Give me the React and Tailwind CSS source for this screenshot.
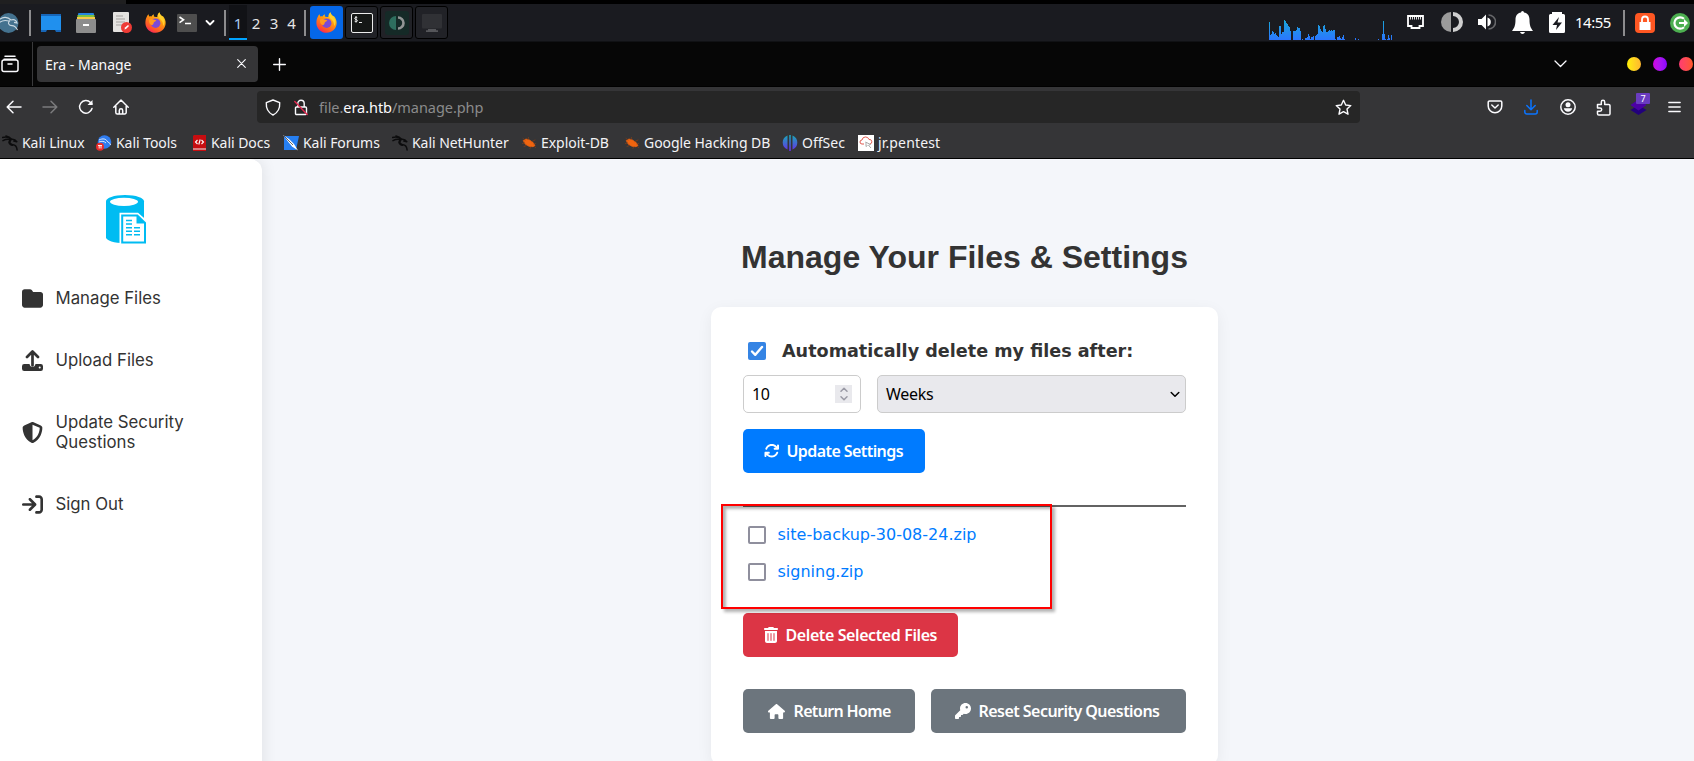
import React from "react";
import { FaFolder, FaShieldHalved, FaArrowRightToBracket, FaArrowsRotate, FaTrashCan, FaHouse, FaKey } from "react-icons/fa6";

const Svg = ({ w, h, className = "", children, sw = 1.5, color = "#fbfbfe" }) => (
  <svg width={w} height={h} viewBox={`0 0 ${w} ${h}`} fill="none" stroke={color} strokeWidth={sw} strokeLinecap="round" strokeLinejoin="round" className={`shrink-0 ${className}`}>
    {children}
  </svg>
);

const Sep = ({ className = "" }) => <div className={`h-[26px] w-[2px] shrink-0 bg-[#8c8c8e] ${className}`} />;

const Firefox = ({ className = "" }) => (
  <svg width="21" height="21" viewBox="0 0 21 21" className={`shrink-0 ${className}`}>
    <defs>
      <linearGradient id="fx" x1="0.8" y1="0" x2="0.2" y2="1">
        <stop offset="0" stopColor="#ffe226" />
        <stop offset="0.4" stopColor="#ff980e" />
        <stop offset="0.8" stopColor="#ff4f2e" />
        <stop offset="1" stopColor="#f5156c" />
      </linearGradient>
    </defs>
    <path fill="url(#fx)" d="M1.8 4.8C2.2 3.6 2.8 2.9 3.6 2.2l.5 2.2c.7-.2 1.7-.2 2.4 0 .4-.9 1.3-1.8 2.3-2.2l.1 2.3c1 .3 3.4.6 3.4.6C12.2 3.200 12.900 1.400 14.600.2c.3 2.300 1.600 3 2.700 4.100l.5-.3c2 2.100 3.200 4.900 2.800 8.100-.6 5-4.800 8.700-9.900 8.700C5.300 20.800.5 16.800.4 11.200.4 8.900.7 6.500 1.800 4.800z" />
    <circle cx="10.600" cy="11.200" r="4.800" fill="#7a4bd6" />
    <path fill="#ff9a1f" d="M4 7.700c1.200-1 3.200-1 4.400-.2 1 .6 2.500.3 3 1-.3 1-2.400 1.100-2.700 2.200-.2 1.500-.9 2.300-2.200 2.300C4.600 12.400 3.600 10 4 7.700z" />
    <path fill="#ffd02e" d="M14.400.4c.3 2.600 3.300 3.800 4.600 7 .9 2.400.5 5-1 6.600.3-2.700-.6-5.200-3-6.900-1.200-.9-2-2.400-1.900-4 .1-1.100.6-2 1.300-2.700z" />
  </svg>
);

const Dragon = ({ color, className = "", sw = 1.5 }) => (
  <Svg w={16} h={16} color={color} sw={sw} className={className}>
    <path d="M.5 2.500C4 1.600 7 2 9.500 4.200M1 5.600c2.500-1.400 5.500-1.700 8-.8M4 .9c2 .3 4 1.200 5.500 3.300M9 4.500c3-.6 4.600.4 5.800 2.200l-3-.7M8.500 5.200C5.600 7.500 8 9.600 10.800 9.700c2.400.1 4 1.600 4.300 5.200" />
    <path d="M8.200 5.500c-1.400 2-.3 4 2 4.400" strokeWidth="2" />
  </Svg>
);

const Bug = () => (
  <Svg w={14} h={14} color="#8a3f16" sw={0.7}>
    <path d="M1.500 4.500 4 3l3.500 1 3.500 2.500 2 3-2 1.200-4-.4-3.500-2z" fill="#f0640f" stroke="#f0640f" />
    <path d="M3 4 1 2.500M6 3.500 6.500 1.500M2 7 0 7.600M4.500 9.500 2 10.500M9 11l-1 1.500M10 5.500l3-1.500M12 8l2-.5M12.300 10.500l1.400 1" />
  </Svg>
);

const load = [18,5,6,9,8,6,7,5,4,3,14,14,6,8,8,20,19,17,16,14,13,9,0,0,9,9,9,10,13,12,12,9,0,1,0,0,2,2,3,6,4,1,3,3,4,0,4,5,6,15,14,11,9,8,14,15,11,8,8,9,10,9,10,9,10,10,1,0,3,3,4,2,1,3,5,1,0,0,0,0,0,0,0,0,0,0,2,0,0,1,0,0,0,0,0,0,0,0,0,0,0,0,0,0,0,0,0,0,0,1,0,0,0,6,19,6,1,0,1,5,2,0,5];

function Panel() {
  return (
    <div className="flex h-[37px] w-full shrink-0 items-center overflow-hidden bg-[#1a1b20]">
      <svg width="19" height="20" viewBox="0 0 19 20" className="shrink-0" fill="none">
        <circle cx="8.500" cy="10" r="10" fill="#44728f" />
        <path d="M-1 7C3 3 8 4 11 7M-1 10c3-3 6-3 10-2M11 7c3-1 5 0 6 3l-3-.6M10 7.500C7 10 9 12.500 12 12.600s4 1.400 5.500 4.400" stroke="#c9d8e2" strokeWidth="1.100" />
      </svg>
      <Sep className="ml-[10px]" />
      <svg width="20" height="18" className="ml-[10px] shrink-0"><path d="M0 0h20v18h-5l-1-2H6l-1 2H0z" fill="#1766b8" /><path d="M0 2h20v14H0z" fill="#2090ee" /></svg>
      <svg width="20" height="20" className="ml-[15px] shrink-0">
        <rect x="2" width="16" height="4" rx="1" fill="#2384e0" /><rect x="1.500" y="2" width="17" height="4" fill="#7cc242" /><rect x="1" y="4" width="18" height="4" fill="#f7c948" />
        <rect y="6" width="20" height="14" rx="1" fill="#8d8d8d" /><rect x="7" y="11" width="6" height="2" fill="#fff" />
      </svg>
      <svg width="20" height="21" className="ml-[16px] shrink-0">
        <rect x="1" width="16" height="20" rx="1" fill="#e4e2e0" /><path d="M4 4h7M4 7h9M4 10h9M4 13h6" stroke="#a5a29f" strokeWidth="1" />
        <circle cx="14.500" cy="15.500" r="5.500" fill="#ee3b35" /><path d="m12.500 17.500.5-2 3-2.500 1 1-3 3z" fill="#fff" />
      </svg>
      <Firefox className="ml-[13px]" />
      <svg width="20" height="18" className="ml-[11px] shrink-0" fill="none"><rect width="20" height="18" rx="1" fill="#4e4e4e" /><path d="m2.500 3 4 2.800-4 2.800M8 9.500h6" stroke="#fff" strokeWidth="1.600" /></svg>
      <Svg w={10} h={6} color="#fff" sw={1.800} className="ml-[8px]"><path d="m1.500 1 3.500 3.500L8.500 1" /></Svg>
      <Sep className="ml-[9px]" />
      <div className="ml-[3px] flex h-[35px] w-[18px] shrink-0 justify-center border-b-2 border-[#00a3ff] bg-[#111216] font-['Noto_Sans'] text-[15px] leading-[36px] text-[#a9cdf0]">1</div>
      <div className="flex w-[57px] shrink-0 font-['Noto_Sans'] text-[15px] leading-[36px] text-[#e6e6e6]">
        <span className="w-[18px] text-center">2</span><span className="w-[18px] text-center">3</span><span className="w-[17px] text-center">4</span>
      </div>
      <Sep />
      <div className="ml-[4px] flex shrink-0 gap-[2px]">
        <div className="flex h-[33px] w-[33px] items-center justify-center rounded-[3px] bg-[#0567e8]"><Firefox /></div>
        <div className="flex h-[33px] w-[33px] items-center justify-center rounded-[3px] border border-black bg-[#212227]">
          <svg width="22" height="20" fill="none"><rect x=".5" y=".5" width="21" height="19" rx="1.500" fill="#151716" stroke="#ececec" /><path d="M6.300 4.700C5.500 4 3.700 4.300 3.700 5.400c0 1.400 2.700.9 2.700 2.300 0 1-1.800 1.300-2.800.5M5 3v6.500M8 9.500h3" stroke="#fff" strokeWidth=".9" /></svg>
        </div>
        <div className="flex h-[33px] w-[33px] items-center justify-center rounded-[3px] border border-black bg-[#212227]">
          <svg width="24" height="24" fill="none"><rect width="24" height="24" rx="3" fill="#152a27" /><path d="M11 5a7 7 0 0 0 0 14z" fill="#2e6e5e" /><path d="M13 6.500a5.500 5.500 0 0 1 0 11" stroke="#929595" strokeWidth="2.600" /></svg>
        </div>
        <div className="flex h-[33px] w-[33px] items-center justify-center rounded-[3px] border border-black bg-[#212227]">
          <svg width="20" height="18"><rect width="20" height="14.500" rx="1" fill="#303135" /><path d="M6 15h8v1.200h2V18H4v-1.800h2z" fill="#55565a" /></svg>
        </div>
      </div>
      <svg width="123" height="20" className="ml-auto mb-[-15px] shrink-0" shapeRendering="crispEdges">
        <defs><linearGradient id="ld" gradientUnits="userSpaceOnUse" x1="0" y1="0" x2="0" y2="20"><stop stopColor="#19a8d8" /><stop offset="1" stopColor="#2b76ff" /></linearGradient></defs>
        {load.map((v, i) => (v ? <rect key={i} x={i} y={20 - v} width="1" height={v} fill="url(#ld)" /> : null))}
      </svg>
      <svg width="17" height="14" className="ml-[15px] mt-[-1px] shrink-0" fill="none"><path d="M1 1h15v10h-3.500v2h-8v-2H1z" stroke="#fff" strokeWidth="1.800" /><path d="M3.500 2v2.500M5.500 2v2.500M7.500 2v2.500M9.500 2v2.500M11.500 2v2.500M13.500 2v2.500" stroke="#ddd" /></svg>
      <svg width="22" height="20" className="ml-[17px] mt-[-1px] shrink-0" fill="none"><path d="M10 0a10 10 0 0 0 0 20z" fill="#9b9b9b" /><path d="M12 2a8 8 0 0 1 0 16" stroke="#cfcfcf" strokeWidth="4" /></svg>
      <svg width="18" height="16" className="ml-[15px] mt-[-1px] shrink-0" fill="none"><path d="M0 5h3.500L8 .5v15L3.500 11H0z" fill="#fff" /><path d="M9.500 3.500a4.700 4.700 0 0 1 0 9z" fill="#fff" /><path d="M10.500 1a7 7 0 0 1 0 14" stroke="#66676a" strokeWidth="1.600" /></svg>
      <svg width="21" height="23" className="ml-[16px] shrink-0" fill="#fff"><path d="M9 1.500a1.500 1.500 0 0 1 3 0c3.500.6 5.500 3.200 5.500 7 0 6 1 8 3.500 11.500H0c2.500-3.500 3.500-5.500 3.500-11.500 0-3.800 2-6.400 5.500-7zM8 21h5c-.5 1.300-1.400 2-2.500 2S8.500 22.300 8 21z" /></svg>
      <svg width="16" height="21" className="ml-[16px] shrink-0"><path d="M3 0h10v2h1.500A1.500 1.500 0 0 1 16 3.500v16a1.500 1.500 0 0 1-1.500 1.500h-13A1.500 1.500 0 0 1 0 19.500v-16A1.500 1.500 0 0 1 1.500 2H3z" fill="#fff" /><path d="m10 5-6.500 8H8l-1 5 6-7.500H8.500z" fill="#1a1b20" /></svg>
      <div className="ml-[10px] w-[38px] shrink-0 whitespace-nowrap font-['Noto_Sans'] text-[15px] tracking-[-0.5px] text-white">14:55</div>
      <Sep className="ml-[10px]" />
      <svg width="20" height="20" className="ml-[10px] shrink-0" fill="none"><rect width="20" height="20" rx="4" fill="#ff5722" /><rect x="4.500" y="9" width="11" height="8" fill="#fff" /><path d="M7 9V6.500a3 3 0 0 1 6 0V9" stroke="#fff" strokeWidth="1.800" /></svg>
      <svg width="20" height="20" className="ml-[15px] mr-[4px] shrink-0" fill="none"><circle cx="10" cy="10" r="10" fill="#4caf50" /><path d="M14 5.800a5.700 5.700 0 1 0 0 8.400" stroke="#fff" strokeWidth="2.200" /><path d="M9 9h5V6l4 4-4 4v-3H9z" fill="#fff" /></svg>
    </div>
  );
}

function Tabs() {
  return (
    <div className="flex h-[46px] w-full shrink-0 items-center border-b border-black bg-[#060606] border-t border-t-[#101114]">
      <Svg w={18} h={18} className="ml-[1px]"><path d="M4 1.200h10M3 4.300h12M3 5h12a2 2 0 0 1 2 2v7.500a2 2 0 0 1-2 2H3a2 2 0 0 1-2-2V7a2 2 0 0 1 2-2zM7 9h4" /></Svg>
      <div className="ml-[13px] h-full w-px bg-[#3a3a3c]" />
      <div className="ml-[4px] mt-[-1px] flex h-[36px] w-[221px] items-center rounded-[4px] bg-[#353537] pl-[8px]">
        <span className="w-[192px] whitespace-nowrap pt-[2px] font-['Noto_Sans'] text-[14px] text-[#fbfbfe]">Era - Manage</span>
        <Svg w={9} h={9} sw={1.100}><path d="m.7.700 7.600 7.600M8.300.700.700 8.300" /></Svg>
      </div>
      <Svg w={13} h={13} className="ml-[15px] mt-px" sw={1.400}><path d="M6.500.7v11.600M.7 6.500h11.600" /></Svg>
      <Svg w={13} h={8} className="ml-auto mt-[-1px]" sw={1.300}><path d="m1 1 5.500 5.500L12 1" /></Svg>
      <div className="ml-[60px] flex shrink-0 gap-[12px] pr-[1px]">
        <div className="size-[14px] rounded-full bg-linear-to-r from-[#fff000] to-[#ffb62e]" />
        <div className="size-[14px] rounded-full bg-linear-to-r from-[#cf00e0] to-[#8a00ff]" />
        <div className="size-[14px] rounded-full bg-linear-to-r from-[#ff3b72] to-[#ff5722]" />
      </div>
    </div>
  );
}

function Nav() {
  return (
    <div className="flex h-[40px] w-full shrink-0 items-center">
      <Svg w={16} h={14} className="ml-[6px]"><path d="M15 7H1.500M7 1.200 1.200 7 7 12.800" /></Svg>
      <Svg w={16} h={14} className="ml-[20px]" color="#7b7b7d"><path d="M1 7h13.500M9 1.200 14.800 7 9 12.800" /></Svg>
      <Svg w={16} h={16} className="ml-[20px]"><path d="M14 9.500A6.300 6.300 0 1 1 12.500 3.500L14 5" /><path d="M14.500 1v5h-5z" fill="#fbfbfe" stroke="none" /></Svg>
      <Svg w={16} h={16} className="ml-[19px]"><path d="M.8 8.200 8 1l7.200 7.200M2.800 7v6.500a1.500 1.500 0 0 0 1.500 1.500h7.400a1.500 1.500 0 0 0 1.500-1.500V7M6.300 15v-3.500a1.700 1.700 0 0 1 3.400 0V15" /></Svg>
      <div className="ml-[128px] flex h-[32px] w-[1103px] items-center rounded-[4px] bg-[#262626]">
        <Svg w={16} h={17} className="ml-[8px]" sw={1.400}><path d="M8 1l6.700 2.600c.3 5-.9 9.600-6.700 12.400C2.200 13.200 1 8.600 1.300 3.600z" /></Svg>
        <Svg w={14} h={17} className="ml-[13px]" sw={1.400}><path d="M2.500 8h9a1 1 0 0 1 1 1v5.500a1 1 0 0 1-1 1h-9a1 1 0 0 1-1-1V9a1 1 0 0 1 1-1zM3.800 8V4.500a3.200 3.200 0 0 1 6.400 0V8" /><path d="m.8 2.500 12.400 13" stroke="#e22850" /></Svg>
        <div className="ml-[11px] w-[300px] whitespace-nowrap font-['Noto_Sans'] text-[14.500px] leading-5 tracking-[-0.05px] text-[#8b8b8c]">file.<span className="text-[#fbfbfe]">era.htb</span>/manage.php</div>
        <Svg w={17} h={17} className="ml-auto mr-[8px]" sw={1.400}><path d="m8.500 1.300 2.200 4.700 5.100.6-3.800 3.500 1 5.100-4.500-2.500L4 15.200l1-5.100L1.200 6.600 6.300 6z" /></Svg>
      </div>
      <Svg w={16} h={14} className="ml-[127px]"><path d="M2.500 1h11a1.300 1.300 0 0 1 1.300 1.300V6a6.800 6.800 0 0 1-13.600 0V2.300A1.300 1.300 0 0 1 2.500 1zM4.800 5 8 8l3.200-3" /></Svg>
      <Svg w={14} h={16} className="ml-[21px]" color="#0a74ff"><path d="M7 1v9.500M2.800 6.500 7 10.700l4.200-4.200M.8 11.500V13a2 2 0 0 0 2 2h8.400a2 2 0 0 0 2-2v-1.500" /></Svg>
      <Svg w={16} h={16} className="ml-[22px]"><circle cx="8" cy="8" r="7.200" /><circle cx="8" cy="5.800" r="2.500" fill="#fbfbfe" stroke="none" /><path d="M3.800 9.300h8.400c-.5 2.300-2 3.500-4.200 3.500s-3.700-1.200-4.200-3.500z" fill="#fbfbfe" stroke="none" /></Svg>
      <Svg w={15} h={17} className="ml-[20px]"><path d="M1.500 5.500h3.800V3a1.700 1.700 0 0 1 3.400 0v2.500h4a1.300 1.300 0 0 1 1.300 1.300v8a1.300 1.300 0 0 1-1.300 1.300H2.800a1.300 1.300 0 0 1-1.300-1.300v-2.500H4a1.700 1.700 0 0 0 0-3.400H1.500z" /></Svg>
      <div className="relative ml-[19px] h-[20px] w-[21px] shrink-0">
        <svg width="17" height="16" className="mt-[2px]"><path d="m8.500 6 8 5-8 5-8-5z" fill="#22007c" /><path d="m8.500.500 8 5.500-8 5.500L.5 6z" fill="#4c00a5" /></svg>
        <div className="absolute left-[6px] top-[-4px] h-[11px] w-[14px] rounded-[1px] bg-[#6a3cc0] text-center font-['Noto_Sans'] text-[9px] leading-[11px] text-white">7</div>
      </div>
      <Svg w={13} h={12} className="ml-[17px]" sw={1.300}><path d="M.8 1.500h11.400M.8 6h11.400M.8 10.500h11.400" /></Svg>
    </div>
  );
}

const bm = "shrink-0 whitespace-nowrap tracking-[-0.05px]";
function Bookmarks() {
  return (
    <div className="flex h-[31px] w-full shrink-0 items-center font-['Noto_Sans'] text-[14px] text-[#f3f3f6]">
      <Dragon color="#0c0c0d" className="ml-[2px]" />
      <span className={`${bm} ml-[4px] w-[74px]`}>Kali Linux</span>
      <svg width="16" height="16" className="shrink-0" fill="none"><circle cx="8.500" cy="7" r="6.800" fill="#2f7cf0" /><path d="M3 5c4-2 7-1 8 1s3 1 3.500 4M3 7c3-1 5-1 7 1" stroke="#dce9fb" /><circle cx="4" cy="11.700" r="4" fill="#ea2c2c" /><path d="M2 10.500h4M3.200 10.500v3M5 10.500v3" stroke="#fff" strokeWidth=".9" /></svg>
      <span className={`${bm} ml-[4px] w-[77px]`}>Kali Tools</span>
      <svg width="13" height="16" className="shrink-0" fill="none"><path d="M1 0h12v16H0V1z" fill="#c70d10" /><path d="M0 14h13" stroke="#eee" /><path d="M4.500 5 2.500 7l2 2M8.500 5l2 2-2 2M7.200 4.500 5.800 9.500" stroke="#fff" strokeWidth="1.100" /></svg>
      <span className={`${bm} ml-[5px] w-[72px]`}>Kali Docs</span>
      <svg width="16" height="16" className="shrink-0"><path d="M1 1h15l-3 14H1z" fill="#267ff2" /><path d="m0 0 6 4 5 5 4 6.500-6-4-4-5z" fill="#fff" /><path d="m1 1 9 9" stroke="#222" strokeWidth=".7" /></svg>
      <span className={`${bm} ml-[4px] w-[89px]`}>Kali Forums</span>
      <Dragon color="#0c0c0d" />
      <span className={`${bm} ml-[4px] w-[110px]`}>Kali NetHunter</span>
      <Bug />
      <span className={`${bm} ml-[5px] w-[84px]`}>Exploit-DB</span>
      <Bug />
      <span className={`${bm} ml-[5px] w-[138px]`}>Google Hacking DB</span>
      <svg width="16" height="16" className="shrink-0"><defs><linearGradient id="os" x1="0" x2="0" y1="0" y2="1"><stop stopColor="#18a9b8" /><stop offset="1" stopColor="#6a2ce8" /></linearGradient></defs><path d="M5.500.5v14A7.500 7.500 0 0 1 5.500.5zM10.500.5v14a7.500 7.500 0 0 0 0-14zM7.200 0h1.600v16H7.200z" fill="url(#os)" /></svg>
      <span className="ml-[4px] w-[56px] shrink-0 whitespace-nowrap">OffSec</span>
      <svg width="16" height="16" className="shrink-0" fill="none"><path d="M0 0h16v16H0z" fill="#fff" /><path d="M6 9H4a2 2 0 0 1 0-4 3.600 3.600 0 0 1 7-.5 2.300 2.300 0 0 1 1 4.500" stroke="#e05a50" /><path d="m7.500 7 5 2.500-2 .8 2.500 2.700M8 7v4.500l1.500-1" stroke="#aaa" /></svg>
      <span className="ml-[4px] shrink-0 whitespace-nowrap tracking-[0.15px]">jr.pentest</span>
    </div>
  );
}

const link = "flex items-center pl-[22px] font-['Inter'] text-[16.800px] leading-5 text-[#333]";
function Sidebar() {
  return (
    <aside className="flex h-[640px] w-[262px] shrink-0 flex-col rounded-r-[12px] bg-white shadow-[2px_0_14px_rgba(0,0,0,0.08)]">
      <svg width="41" height="49" viewBox="0 0 41 50" preserveAspectRatio="none" className="ml-[106px] mt-[36px] shrink-0" fill="none">
        <path d="M0 6.500C0 3 8 0 19 0s19 3 19 6.500V43c0 3.500-8 6-19 6S0 46.500 0 43z" fill="#00bcf2" />
        <ellipse cx="18" cy="7" rx="14" ry="4.200" fill="#fff" />
        <path d="M13.500 18H32l9 8v24H13.500z" fill="#fff" />
        <path d="M15.200 20h16.500l8.300 8v21.500H15.200z" fill="#00bcf2" />
        <path d="M17.200 22H30.500v7h7.500v18.500H17.200z" fill="#fff" />
        <path d="M20 26h6M20 29.500h6M20 33.500h6M28 33.500h6M20 37h6M28 37h6M20 40.500h6M28 40.500h6" stroke="#00bcf2" strokeWidth="1.600" />
      </svg>
      <div className={`${link} mt-[44px] h-[20px]`}><FaFolder size={21} className="mr-[12.500px] shrink-0" /><span>Manage Files</span></div>
      <div className={`${link} mt-[42px] h-[20px]`}>
        <svg width="21" height="21" viewBox="0 0 21 21" fill="none" className="mr-[12.500px] shrink-0">
          <path d="M10.500 15.500V2M5 7l5.500-5.500L16 7" stroke="#333" strokeWidth="2.700" strokeLinecap="round" strokeLinejoin="round" />
          <path d="M2.200 14H7.500c.4 2 1.500 3 3 3s2.600-1 3-3h5.300A2.200 2.200 0 0 1 21 16.200v2.600A2.200 2.200 0 0 1 18.800 21H2.200A2.200 2.200 0 0 1 0 18.800v-2.600A2.200 2.200 0 0 1 2.200 14z" fill="#333" />
          <circle cx="17.700" cy="17.500" r="1" fill="#fff" />
        </svg>
        <span>Upload Files</span>
      </div>
      <div className={`${link} mt-[42px] h-[40px]`}><FaShieldHalved size={21} className="mr-[12.500px] shrink-0" /><span>Update Security<br />Questions</span></div>
      <div className={`${link} mt-[42px] h-[20px]`}><FaArrowRightToBracket size={21} className="mr-[12.500px] shrink-0" /><span>Sign Out</span></div>
    </aside>
  );
}

const btn = "flex h-[44px] shrink-0 items-center rounded-[5px] font-['Noto_Sans'] text-[16px] font-semibold whitespace-nowrap text-white";
const Box = () => <div className="ml-[5px] size-[18px] shrink-0 rounded-[2px] border-2 border-[#8f8f9d] bg-white" />;

function Card() {
  return (
    <div className="relative ml-[449px] mt-[34px] flex h-[458px] w-[507px] shrink-0 flex-col rounded-[10px] bg-white px-[32px] pt-[33px] shadow-[0_4px_16px_rgba(0,0,0,0.06)]">
      <div className="flex h-[22px] items-center">
        <svg width="18" height="18" className="ml-[5px] shrink-0" fill="none"><rect width="18" height="18" rx="2" fill="#3584e4" /><path d="m4 9.500 3.300 3.300L14 5" stroke="#fff" strokeWidth="2.400" strokeLinecap="round" strokeLinejoin="round" /></svg>
        <span className="ml-[16px] whitespace-nowrap font-['DejaVu_Sans'] text-[17.600px] font-bold text-[#333]">Automatically delete my files after:</span>
      </div>
      <div className="mt-[13px] flex gap-[16px] font-['Noto_Sans'] text-[16px] tracking-[-0.3px] text-black">
        <div className="flex h-[38px] w-[118px] items-center justify-between rounded-[5px] border border-[#ccc] pl-[8px] pr-[8px]">
          <span>10</span>
          <div className="flex h-[18px] w-[17px] items-center justify-center bg-[#e9e9ed]"><Svg w={8} h={14} color="#9a9aa5"><path d="M1 4.200 4 1.200l3 3M1 9.800l3 3 3-3" /></Svg></div>
        </div>
        <div className="flex h-[38px] flex-1 items-center justify-between rounded-[5px] border border-[#ccc] bg-[#e9e9ed] pl-[8px] pr-[5px]">
          <span>Weeks</span><Svg w={10} h={7} color="#000"><path d="m1.200 1.500 3.800 3.800 3.800-3.800" /></Svg>
        </div>
      </div>
      <div className={`${btn} mt-[16px] w-[182px] bg-[#007bff] tracking-[-0.58px]`}><FaArrowsRotate size={15.500} className="ml-[20.500px] mr-[7.500px]" />Update Settings</div>
      <div className="mt-[32px] h-[2px] shrink-0 bg-[#636363]" />
      <div className="mt-[19px] flex h-[18px] items-center font-['DejaVu_Sans'] text-[16px] text-[#007bff]"><Box /><span className="ml-[11.500px] whitespace-nowrap">site-backup-30-08-24.zip</span></div>
      <div className="mt-[19px] flex h-[18px] items-center font-['DejaVu_Sans'] text-[16px] text-[#007bff]"><Box /><span className="ml-[11.500px] mt-[-1px] whitespace-nowrap">signing.zip</span></div>
      <div className={`${btn} mt-[32px] w-[215px] bg-[#dc3545] tracking-[-0.4px]`}><FaTrashCan size={16} className="ml-[19.500px] mr-[7px]" />Delete Selected Files</div>
      <div className="mt-[32px] flex gap-[16px]">
        <div className={`${btn} w-[172px] bg-[#6c757d] tracking-[-0.65px]`}><FaHouse size={17} className="ml-[25px] mr-[8.500px]" />Return Home</div>
        <div className={`${btn} flex-1 bg-[#6c757d] tracking-[-0.54px]`}><FaKey size={16} className="ml-[24px] mr-[7.500px]" />Reset Security Questions</div>
      </div>
      <div className="absolute left-[10px] top-[197px] h-[105px] w-[331px] border-2 border-[#ff0000] shadow-[3px_3px_3px_rgba(0,0,0,0.3),inset_3px_3px_3px_rgba(0,0,0,0.3)]" />
    </div>
  );
}

export default function App() {
  return (
    <div className="flex h-[761px] w-[1694px] flex-col overflow-hidden bg-[#353537]">
      <div className="h-[4px] w-full shrink-0 bg-black"><div className="h-full w-[126px] bg-[#1f1f20]" /></div>
      <Panel />
      <Tabs />
      <Nav />
      <Bookmarks />
      <div className="flex h-[603px] w-full shrink-0 items-start overflow-hidden border-t border-black bg-[#f4f6fa]">
        <Sidebar />
        <main className="flex min-w-0 flex-1 flex-col">
          <h1 className="ml-[449px] mt-[77px] h-[37px] w-[507px] whitespace-nowrap text-center font-['Liberation_Sans'] text-[32px] leading-[42px] font-bold text-[#333]">Manage Your Files &amp; Settings</h1>
          <Card />
        </main>
      </div>
    </div>
  );
}
